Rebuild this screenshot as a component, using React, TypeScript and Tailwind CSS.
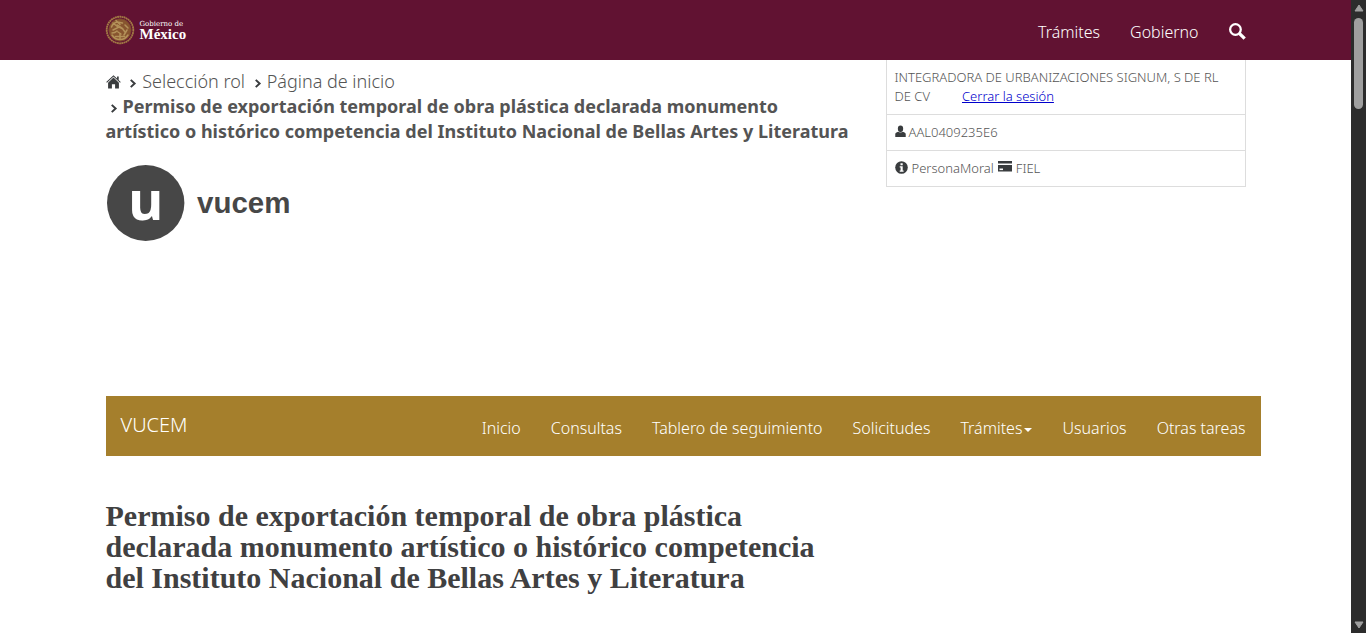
import React from "react";

const navItems = ["Inicio", "Consultas", "Tablero de seguimiento", "Solicitudes", "Trámites", "Usuarios", "Otras tareas"];

function Seal() {
  return (
    <svg viewBox="0 0 30 30" className="-ml-px size-[30px]" aria-hidden="true">
      <circle cx="15" cy="15" r="13.3" fill="none" stroke="#a37b45" strokeWidth="1.8" strokeDasharray="1.8 0.4" />
      <circle cx="15" cy="15" r="11.2" fill="#87552f" stroke="#7a4030" strokeWidth="0.8" />
      <g fill="none" stroke="#b39159" strokeWidth="1.5" strokeLinecap="round">
        <path d="M6.500 12c1-3 4-5 6-5l5 1M8 8l5 4M11 5.500l4 4" />
        <path d="M8 15l6-3 4 2M12 10l5 3 3 4" />
        <path d="M7 18c2 0 4-1 5-2M13 17l3 2M20 10l3 3M22 15l-3 5" />
        <path d="M7 20c2 3 4 4.500 8 4.500s6-1.500 8-4.500" />
        <path d="M10.500 21.500h9M15 19v5" />
      </g>
    </svg>
  );
}

function Chevron() {
  return (
    <svg viewBox="0 0 8 10" className="mr-[5px] ml-1 inline-block h-[9px] w-2 align-[0px]" aria-hidden="true">
      <path d="M1.5 1L5.8 5L1.5 9" fill="none" stroke="#393c3e" strokeWidth="2.2" />
    </svg>
  );
}

function HomeIcon() {
  return (
    <svg viewBox="0 0 16 15" className="inline-block h-[14px] w-[15px] align-[-1px]" aria-hidden="true">
      <path d="M0.6 8L8 1L15.400 8" fill="none" stroke="#393c3e" strokeWidth="1.100" />
      <path d="M11.800 1.500h1.800v4l-1.800-2z" fill="#393c3e" />
      <path d="M8 2.700L2.200 8.300V14.500H6.300V10H9.700V14.500H13.800V8.300Z" fill="#393c3e" />
    </svg>
  );
}

function SearchIcon() {
  return (
    <svg viewBox="0.7 0.7 16.6 16.6" className="size-[17px]" aria-hidden="true">
      <circle cx="7" cy="7" r="5.200" fill="none" stroke="#fff" strokeWidth="2.2" />
      <path d="M10.800 10.800L16 16" stroke="#fff" strokeWidth="3.200" />
    </svg>
  );
}

function UserIcon() {
  return (
    <svg viewBox="0 0 12 13" className="mr-[3px] inline-block h-[13px] w-[11px] align-[-1px]" aria-hidden="true">
      <ellipse cx="6" cy="3.6" rx="2.9" ry="3.6" fill="#393c3e" />
      <path d="M3.4 6.800C1.6 7.600.3 7.800.3 9.600v2.800h11.4V9.600c0-1.800-1.3-2-3.1-2.800-1.5 1.200-3.7 1.200-5.200 0z" fill="#393c3e" />
    </svg>
  );
}

function InfoIcon() {
  return (
    <svg viewBox="0 0 13 13" className="mr-1 inline-block size-[13px] align-[-1px]" aria-hidden="true">
      <circle cx="6.5" cy="6.5" r="6.3" fill="#393c3e" />
      <path d="M5.5 2.2h2.2v2H5.500zM4.700 5.200h3v4.200h.9v1.300H4.700V9.400h.9V6.500h-.9z" fill="#fff" />
    </svg>
  );
}

function CardIcon() {
  return (
    <svg viewBox="0 0 14 11" className="mx-1 inline-block h-[11px] w-[14px] align-[1px]" aria-hidden="true">
      <path d="M0 0h14v2.500H0zM0 4h14v6.500H0z" fill="#393c3e" />
      <path d="M1.500 7.500h3.500v1.600h-3.500z" fill="#fff" />
    </svg>
  );
}

function VucemLogo() {
  return (
    <svg viewBox="0 0 190 80" className="h-20 w-[190px]" role="img" aria-label="vucem">
      <ellipse cx="39.700" cy="40" rx="38.700" ry="38" fill="#474747" />
      <text x="22" y="57" fontFamily="Open Sans, sans-serif" fontWeight="700" fontSize="54" fill="#fff">u</text>
      <text x="91" y="50" fontFamily="Liberation Sans, sans-serif" fontWeight="700" fontSize="29.500" fill="#474747">vucem</text>
    </svg>
  );
}

function Scrollbar() {
  return (
    <div className="flex w-[15px] shrink-0 flex-col items-center justify-between bg-[#2c2c2c] py-1" aria-hidden="true">
      <div className="flex flex-col items-center gap-[6px]">
        <svg viewBox="0 0 10 8" className="h-2 w-[10px]">
          <path d="M5 1L9 7H1Z" fill="#9f9f9f" stroke="#9f9f9f" strokeLinejoin="round" />
        </svg>
        <div className="h-[91px] w-[9px] rounded-full bg-[#9f9f9f]" />
      </div>
      <svg viewBox="0 0 10 8" className="h-2 w-[10px]">
        <path d="M5 7L9 1H1Z" fill="#9f9f9f" stroke="#9f9f9f" strokeLinejoin="round" />
      </svg>
    </div>
  );
}

export default function App() {
  return (
    <div className="flex h-screen bg-white font-['Noto_Sans',sans-serif] font-light text-[#545454]">
      <div className="min-w-0 flex-1 overflow-hidden">
        <header className="h-[60px] bg-[#611232] text-white">
          <div className="mx-auto flex h-full max-w-[1170px] items-center justify-between px-[15px]">
            <a href="#" className="flex items-center gap-[5px]">
              <Seal />
              <span className="flex flex-col font-['Liberation_Serif',serif] font-bold">
                <span className="font-['DejaVu_Serif',serif] text-[7px] leading-[7px] font-normal">Gobierno de</span>
                <span className="text-[15px] leading-3">México</span>
              </span>
            </a>
            <nav className="flex items-center gap-[30px] pt-1 text-base">
              <a href="#">Trámites</a>
              <a href="#">Gobierno</a>
              <button type="button" aria-label="Buscar" className="pb-[2px]">
                <SearchIcon />
              </button>
            </nav>
          </div>
        </header>

        <main className="mx-auto max-w-[1170px] px-[15px]">
          <div className="flex h-[336px] items-start gap-[30px]">
            <div className="min-w-0 flex-1 pt-[9px]">
              <nav aria-label="Ruta" className="pr-1 text-lg leading-[25px]">
                <a href="#" aria-label="Inicio"><HomeIcon /></a>{" "}
                <Chevron /><a href="#">Selección rol</a>{" "}
                <Chevron /><a href="#">Página de inicio</a>
                <br />
                <Chevron />
                <span className="font-bold">
                  Permiso de exportación temporal de obra plástica declarada monumento artístico o histórico competencia del Instituto Nacional de Bellas Artes y Literatura
                </span>
              </nav>
              <div className="pt-[19px]">
                <VucemLogo />
              </div>
            </div>
            <ul className="w-[360px] shrink-0 divide-y divide-[#ddd] border border-t-0 border-[#ddd] text-[13px] leading-[19px]">
              <li className="p-2">
                INTEGRADORA DE URBANIZACIONES SIGNUM, S DE RL DE CV
                <a href="#" className="ml-8 text-[#0000cc] underline">Cerrar la sesión</a>
              </li>
              <li className="p-2"><UserIcon />AAL0409235E6</li>
              <li className="p-2"><InfoIcon />PersonaMoral<CardIcon />FIEL</li>
            </ul>
          </div>

          <nav className="-mr-[15px] flex h-[60px] items-center justify-between bg-[#a57f2c] px-[15px] text-white">
            <a href="#" className="pb-[2px] text-xl">VUCEM</a>
            <div className="flex gap-[30px] pt-1 text-base">
              {navItems.map((item) => (
                <a key={item} href="#" className="flex items-center">
                  {item}
                  {item === "Trámites" && (
                    <span className="mt-1 ml-[2px] border-x-4 border-t-4 border-x-transparent border-t-white" />
                  )}
                </a>
              ))}
            </div>
          </nav>

          <h1 className="max-w-[750px] pt-11 font-['Liberation_Serif',serif] text-[30px] leading-[31px] font-bold text-[#404041]">
            Permiso de exportación temporal de obra plástica declarada monumento artístico o histórico competencia del Instituto Nacional de Bellas Artes y Literatura
          </h1>
        </main>
      </div>
      <Scrollbar />
    </div>
  );
}
